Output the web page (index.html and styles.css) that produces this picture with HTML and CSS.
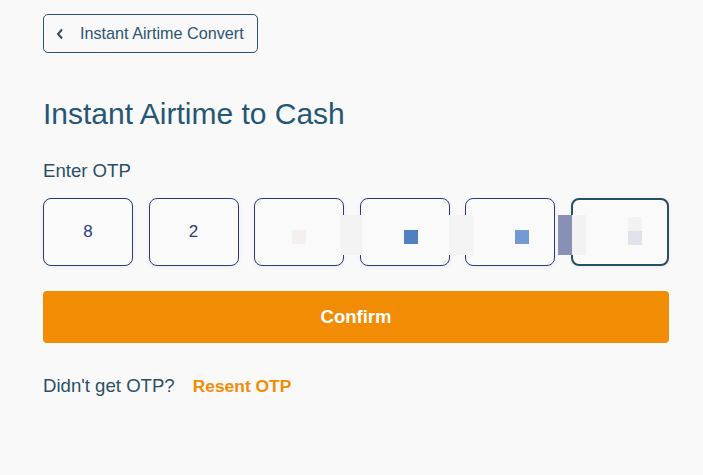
FILE: index.html
```html
<!DOCTYPE html>
<html lang="en">
<head>
	<meta charset="UTF-8">
	<title>Instant Airtime to Cash</title>
	<link rel="stylesheet" href="styles.css">
</head>
<body>
	<div class="page">
		<a class="back" href="#">
			<svg class="back-icon" width="8" height="12" viewBox="0 0 8 12"><path d="M6 1.5L2 6l4 4.5" fill="none" stroke="#2a4d66" stroke-width="2"/></svg>
			<span>Instant Airtime Convert</span>
		</a>
		<h1 class="title">Instant Airtime to Cash</h1>
		<div class="label">Enter OTP</div>
		<div class="otp">
			<div class="cell">8</div>
			<div class="cell">2</div>
			<div class="cell"><span class="dot dot-a"></span></div>
			<div class="cell"><span class="dot dot-b"></span></div>
			<div class="cell"><span class="dot dot-c"></span></div>
			<div class="cell cell-focus"><span class="dot dot-d"></span></div>
			<span class="smear smear-1"></span>
			<span class="smear smear-2"></span>
			<span class="smear smear-3"></span>
			<span class="caret"></span>
		</div>
		<button class="confirm">Confirm</button>
		<div class="resend">
			<span>Didn't get OTP?</span>
			<a href="#" class="resend-link">Resent OTP</a>
		</div>
	</div>
</body>
</html>
```

FILE: styles.css
```css
*{
	padding: 0;
	margin: 0;
	box-sizing: border-box;
}
body{
	background: #f9f9f9;
	font-family: "Liberation Sans", Arial, sans-serif;
	color: #2c4f68;
}
.page{
	padding: 14px 34px 0 43px;
}
.back{
	display: inline-flex;
	align-items: center;
	gap: 16px;
	height: 39px;
	padding: 0 13px 0 12px;
	border: 1px solid #2a5470;
	border-radius: 5px;
	color: #2e5471;
	text-decoration: none;
	font-size: 16.2px;
}
.title{
	margin-top: 43px;
	font-size: 30px;
	font-weight: normal;
	color: #255675;
	line-height: 36px;
}
.label{
	margin-top: 28px;
	font-size: 18.6px;
	line-height: 22px;
}
.otp{
	position: relative;
	display: flex;
	gap: 15.6px;
	margin-top: 16px;
}
.cell{
	position: relative;
	flex: 0 0 90px;
	height: 68px;
	display: flex;
	align-items: center;
	justify-content: center;
	border: 1px solid #2b3982;
	border-radius: 8px;
	background: #fafafa;
	box-shadow: 0 1px 5px rgba(0,0,0,0.06);
	color: #2b3982;
	font-size: 17px;
}
.cell-focus{
	flex: 1;
	border: 2px solid #244f66;
}
.dot{
	position: absolute;
	top: 31px;
	width: 14px;
	height: 14px;
}
.dot-a{ background: #f5efed; left: 37px; }
.dot-b{ background: #4f81c0; left: 43px; }
.dot-c{ background: #739bd3; left: 49px; }
.dot-d{ background: #e1e3ec; left: 55px; }
.dot-d::before{
	content: "";
	position: absolute;
	left: 0;
	top: -14px;
	width: 14px;
	height: 14px;
	background: #f3f3f3;
}
.smear{
	position: absolute;
	top: 17px;
	height: 40px;
	background: #f3f3f3;
}
.smear-1{ left: 297px; width: 22px; }
.smear-2{ left: 406px; width: 25px; background: #f4f4f4; }
.smear-3{ left: 529px; width: 14px; background: #f2f2f2; }
.caret{
	position: absolute;
	top: 17px;
	left: 515px;
	width: 14px;
	height: 40px;
	background: #8890b5;
}
.confirm{
	display: block;
	width: 100%;
	height: 52px;
	margin-top: 25px;
	border: none;
	border-radius: 4px;
	background: #f28c04;
	color: #fff;
	font-family: "Liberation Sans", Arial, sans-serif;
	font-size: 18.5px;
	font-weight: bold;
}
.resend{
	display: flex;
	align-items: baseline;
	gap: 18px;
	margin-top: 32px;
	font-size: 18.6px;
	line-height: 22px;
}
.resend-link{
	color: #f28c04;
	font-weight: bold;
	font-size: 17.4px;
	text-decoration: none;
}
```
